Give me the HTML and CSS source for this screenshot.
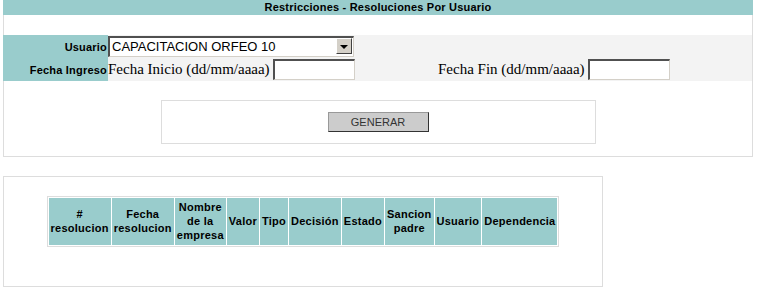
FILE: index.html
```html
<!DOCTYPE html>
<html lang="es">
<head>
  <meta charset="UTF-8">
  <title>Restricciones - Resoluciones Por Usuario</title>
  <link rel="stylesheet" href="styles.css">
</head>
<body>
  <div class="panel panel-top">
    <div class="titulo">Restricciones - Resoluciones Por Usuario</div>
    <div class="blank"></div>

    <div class="form">
      <div class="label">Usuario</div>
      <div class="field span2">
        <div class="combo">
          <span class="combo-text">CAPACITACION ORFEO 10</span>
          <span class="combo-btn"></span>
        </div>
      </div>

      <div class="label">Fecha Ingreso</div>
      <div class="field">Fecha Inicio (dd/mm/aaaa)&nbsp;<span class="date"></span></div>
      <div class="field">Fecha Fin (dd/mm/aaaa)&nbsp;<span class="date"></span></div>
    </div>

    <div class="acciones">
      <button class="btn" type="button">GENERAR</button>
    </div>
  </div>

  <div class="panel panel-res">
    <table class="res">
      <tr>
        <th>#<br>resolucion</th>
        <th>Fecha<br>resolucion</th>
        <th>Nombre<br>de la<br>empresa</th>
        <th>Valor</th>
        <th>Tipo</th>
        <th>Decisión</th>
        <th>Estado</th>
        <th>Sancion<br>padre</th>
        <th>Usuario</th>
        <th>Dependencia</th>
      </tr>
    </table>
  </div>
</body>
</html>
```

FILE: styles.css
```css
body{
  margin: 0;
  font-family: "Liberation Sans", Arial, sans-serif;
  color: #000;
  background: #fff;
}

.panel{
  margin-left: 3px;
  border: 1px solid #ddd;
  box-sizing: border-box;
}

.panel-top{
  width: 750px;
  border-top: 0;
  padding-bottom: 12px;
}

.titulo{
  margin: 0 -1px;
  height: 15px;
  line-height: 15px;
  background: #9cc;
  text-align: center;
  font-size: 11px;
  font-weight: bold;
  letter-spacing: 0.2px;
}

.blank{
  height: 20px;
}

.form{
  display: grid;
  grid-template-columns: 105px 330px 1fr;
  grid-auto-rows: 23px;
  margin-left: -1px;
  background: #f3f3f3;
}

.label{
  display: flex;
  align-items: center;
  justify-content: flex-end;
  padding-right: 1px;
  background: #9cc;
  font-size: 11px;
  font-weight: bold;
  letter-spacing: 0.2px;
}

.field{
  display: flex;
  align-items: center;
  font-family: "Liberation Serif", "Times New Roman", serif;
  font-size: 15px;
  white-space: nowrap;
}

.span2{
  grid-column: span 2;
}

.combo{
  display: flex;
  width: 246px;
  height: 21px;
  box-sizing: border-box;
  border-style: solid;
  border-width: 2px 1px 1px 2px;
  border-color: #505050 #d4d0c8 #d4d0c8 #505050;
  background: #fff;
}

.combo-text{
  flex: 1;
  padding-left: 2px;
  font-family: "Liberation Sans", Arial, sans-serif;
  font-size: 13px;
  line-height: 18px;
}

.combo-btn{
  width: 16px;
  height: 16px;
  margin: 0 1px 0 0;
  box-sizing: border-box;
  border: 1px solid;
  border-color: #fff #404040 #404040 #fff;
  background: #d4d0c8;
  display: flex;
  align-items: center;
  justify-content: center;
}

.combo-btn::after{
  content: '';
  border-left: 4px solid transparent;
  border-right: 4px solid transparent;
  border-top: 4px solid #000;
  margin-top: 1px;
}

.date{
  display: inline-block;
  width: 82px;
  height: 21px;
  box-sizing: border-box;
  border-style: solid;
  border-width: 2px 1px 1px 2px;
  border-color: #505050 #d4d0c8 #d4d0c8 #505050;
  background: #fff;
}

.acciones{
  width: 435px;
  height: 44px;
  margin: 19px auto 0;
  box-sizing: border-box;
  border: 1px solid #ddd;
  display: flex;
  justify-content: center;
  padding-top: 11px;
}

.btn{
  width: 101px;
  height: 20px;
  padding: 0;
  background: #ccc;
  border: 1px solid;
  border-color: #999 #333 #333 #999;
  font-family: "Liberation Sans", Arial, sans-serif;
  font-size: 11px;
  color: #333;
}

.panel-res{
  width: 600px;
  height: 111px;
  margin-top: 19px;
  padding-top: 19px;
}

.res{
  margin: 0 auto;
  border: 1px solid #ddd;
  border-spacing: 1px;
}

.res th{
  padding: 2px 2px 3px;
  background: #9cc;
  font-size: 11px;
  line-height: 14px;
  letter-spacing: 0.25px;
  white-space: nowrap;
}
```
